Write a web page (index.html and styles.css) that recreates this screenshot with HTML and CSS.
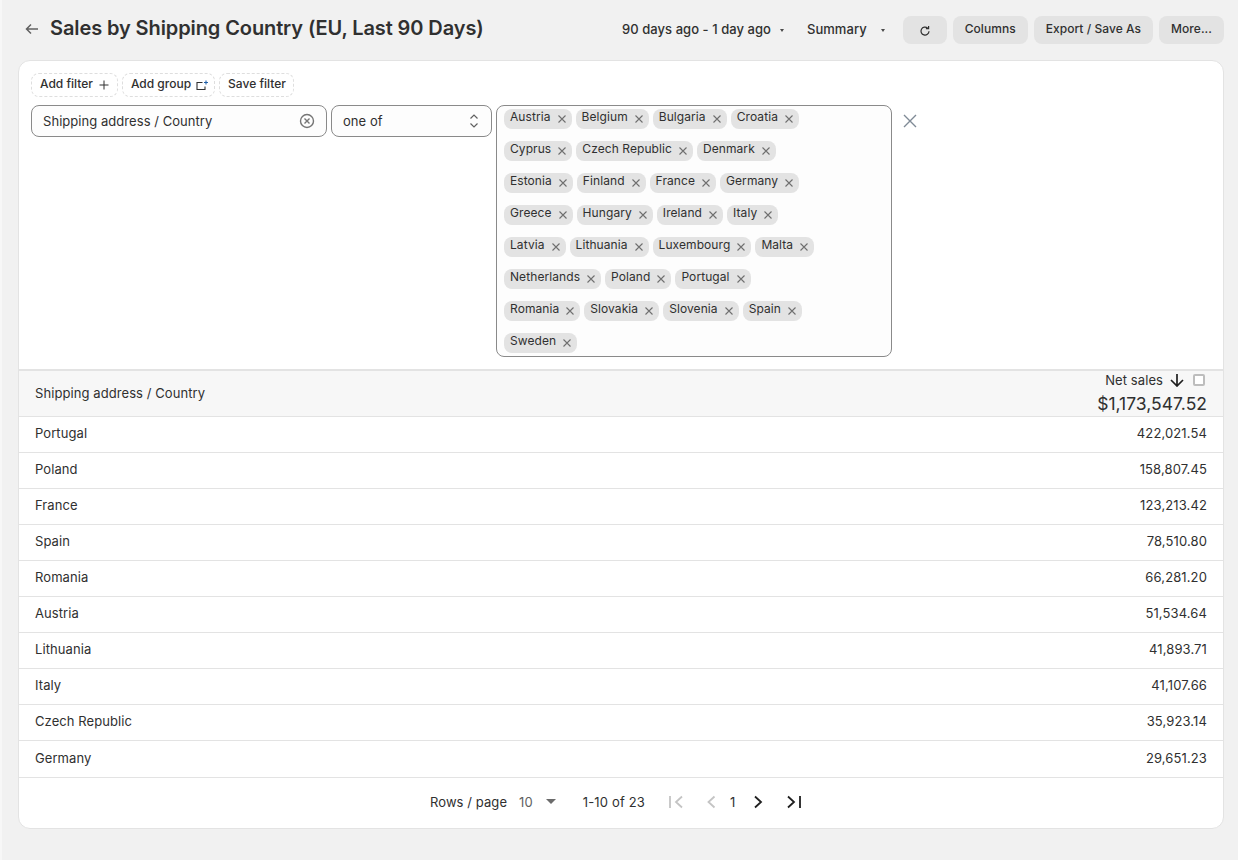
FILE: index.html
```html
<!DOCTYPE html>
<html lang="en">
<head>
<meta charset="utf-8">
<title>Sales by Shipping Country</title>
<link rel="stylesheet" href="styles.css">
</head>
<body>
<main class="page">
  <header class="topbar">
    <div class="title-group">
      <svg class="back" width="16" height="16" viewBox="0 0 16 16"><path d="M14 9H2.500M7 4.500 2.500 9 7 13.500" fill="none" stroke="#616161" stroke-width="1.500"/></svg>
      <h1>Sales by Shipping Country (EU, Last 90 Days)</h1>
    </div>
    <div class="actions">
      <span class="drop drop-date">90 days ago - 1 day ago<i class="caret"></i></span>
      <span class="drop drop-summary">Summary<i class="caret"></i></span>
      <button class="btn btn-refresh"><svg width="12" height="12" viewBox="0 0 12 12"><path d="M10 6.200A4 4 0 1 1 8.600 3" fill="none" stroke="#303030" stroke-width="1.200"/><path d="M9.600 1v2.700H6.900" fill="none" stroke="#303030" stroke-width="1.200"/></svg></button>
      <button class="btn">Columns</button>
      <button class="btn">Export / Save As</button>
      <button class="btn">More...</button>
    </div>
  </header>

  <section class="card">
    <div class="filters">
      <div class="filter-actions">
        <button class="dash dash-filter">Add filter<svg width="10" height="10" viewBox="0 0 10 10"><path d="M5 .500v9M.500 5h9" stroke="#303030" stroke-width="1"/></svg></button>
        <button class="dash dash-group">Add group<svg width="12" height="11" viewBox="0 0 12 11"><path d="M6.500 2.500H1v7h8V6.500" fill="none" stroke="#303030" stroke-width="1.100"/><path d="M10 .500v4M8 2.500h4" stroke="#1f5fa8" stroke-width="1.100"/></svg></button>
        <button class="dash">Save filter</button>
      </div>
      <div class="filter-row">
        <div class="field field-prop">Shipping address / Country
          <svg width="16" height="16" viewBox="0 0 16 16"><circle cx="8" cy="8" r="6.500" fill="none" stroke="#757575" stroke-width="1.400"/><path d="m5.500 5.500 5 5m0-5-5 5" stroke="#757575" stroke-width="1.400"/></svg>
        </div>
        <div class="field field-op">one of
          <svg width="10" height="16" viewBox="0 0 10 16"><path d="m1.500 5.500 3.500-3.500 3.500 3.500M1.500 10.500 5 14l3.500-3.500" fill="none" stroke="#616161" stroke-width="1.200"/></svg>
        </div>
        <div class="field-values">
          <div class="chip-row">
            <span class="chip">Austria<svg class="x"><use href="#x"/></svg></span>
            <span class="chip">Belgium<svg class="x"><use href="#x"/></svg></span>
            <span class="chip">Bulgaria<svg class="x"><use href="#x"/></svg></span>
            <span class="chip">Croatia<svg class="x"><use href="#x"/></svg></span>
          </div>
          <div class="chip-row">
            <span class="chip">Cyprus<svg class="x"><use href="#x"/></svg></span>
            <span class="chip">Czech Republic<svg class="x"><use href="#x"/></svg></span>
            <span class="chip">Denmark<svg class="x"><use href="#x"/></svg></span>
          </div>
          <div class="chip-row">
            <span class="chip">Estonia<svg class="x"><use href="#x"/></svg></span>
            <span class="chip">Finland<svg class="x"><use href="#x"/></svg></span>
            <span class="chip">France<svg class="x"><use href="#x"/></svg></span>
            <span class="chip">Germany<svg class="x"><use href="#x"/></svg></span>
          </div>
          <div class="chip-row">
            <span class="chip">Greece<svg class="x"><use href="#x"/></svg></span>
            <span class="chip">Hungary<svg class="x"><use href="#x"/></svg></span>
            <span class="chip">Ireland<svg class="x"><use href="#x"/></svg></span>
            <span class="chip">Italy<svg class="x"><use href="#x"/></svg></span>
          </div>
          <div class="chip-row">
            <span class="chip">Latvia<svg class="x"><use href="#x"/></svg></span>
            <span class="chip">Lithuania<svg class="x"><use href="#x"/></svg></span>
            <span class="chip">Luxembourg<svg class="x"><use href="#x"/></svg></span>
            <span class="chip">Malta<svg class="x"><use href="#x"/></svg></span>
          </div>
          <div class="chip-row">
            <span class="chip">Netherlands<svg class="x"><use href="#x"/></svg></span>
            <span class="chip">Poland<svg class="x"><use href="#x"/></svg></span>
            <span class="chip">Portugal<svg class="x"><use href="#x"/></svg></span>
          </div>
          <div class="chip-row">
            <span class="chip">Romania<svg class="x"><use href="#x"/></svg></span>
            <span class="chip">Slovakia<svg class="x"><use href="#x"/></svg></span>
            <span class="chip">Slovenia<svg class="x"><use href="#x"/></svg></span>
            <span class="chip">Spain<svg class="x"><use href="#x"/></svg></span>
          </div>
          <div class="chip-row">
            <span class="chip">Sweden<svg class="x"><use href="#x"/></svg></span>
          </div>
        </div>
        <svg class="remove" width="14" height="14" viewBox="0 0 14 14"><path d="m1 1 12 12M13 1 1 13" stroke="#7f8a96" stroke-width="1.400"/></svg>
      </div>
    </div>

    <div class="table">
      <div class="thead">
        <span>Shipping address / Country</span>
        <div class="metric">
          <div class="metric-label">Net sales
            <svg width="14" height="14" viewBox="0 0 14 14"><path d="M7 1v12M1 7 7 13l6-6" fill="none" stroke="#1f1f1f" stroke-width="1.700"/></svg>
            <i class="checkbox"></i>
          </div>
          <div class="metric-total">$1,173,547.52</div>
        </div>
      </div>
      <div class="row"><span>Portugal</span><span class="num">422,021.54</span></div>
      <div class="row"><span>Poland</span><span class="num">158,807.45</span></div>
      <div class="row"><span>France</span><span class="num">123,213.42</span></div>
      <div class="row"><span>Spain</span><span class="num">78,510.80</span></div>
      <div class="row"><span>Romania</span><span class="num">66,281.20</span></div>
      <div class="row"><span>Austria</span><span class="num">51,534.64</span></div>
      <div class="row"><span>Lithuania</span><span class="num">41,893.71</span></div>
      <div class="row"><span>Italy</span><span class="num">41,107.66</span></div>
      <div class="row"><span>Czech Republic</span><span class="num">35,923.14</span></div>
      <div class="row row-last"><span>Germany</span><span class="num">29,651.23</span></div>
    </div>

    <footer class="pager">
      <span class="pager-label">Rows / page</span>
      <span class="pager-size">10</span>
      <i class="pager-caret"></i>
      <span class="pager-range">1-10 of 23</span>
      <svg class="nav nav-first" width="16" height="14" viewBox="0 0 16 14"><path d="M2 1v12M14 1.500 8 7l6 5.500" fill="none" stroke="#c4c4c4" stroke-width="1.800"/></svg>
      <svg class="nav nav-prev" width="10" height="14" viewBox="0 0 10 14"><path d="M8.500 1.500 2.500 7l6 5.500" fill="none" stroke="#c4c4c4" stroke-width="1.800"/></svg>
      <span class="pager-page">1</span>
      <svg class="nav nav-next" width="10" height="14" viewBox="0 0 10 14"><path d="M2 1.500 8 7l-6 5.500" fill="none" stroke="#1f1f1f" stroke-width="1.800"/></svg>
      <svg class="nav nav-last" width="16" height="14" viewBox="0 0 16 14"><path d="M14 1v12M2 1.500 8 7l-6 5.500" fill="none" stroke="#1f1f1f" stroke-width="1.800"/></svg>
    </footer>
  </section>
</main>
<svg class="sprite" width="0" height="0"><defs><symbol id="x" viewBox="0 0 8 8"><path d="m.500.500 7 7m0-7-7 7" stroke="#6f6f6f" stroke-width="1.100"/></symbol></defs></svg>
</body>
</html>
```
FILE: styles.css
```css
* { box-sizing: border-box; }
html, body { margin: 0; height: 100%; }
body {
  background: #f1f1f1;
  color: #303030;
  font: 13px/20px Inter, "Liberation Sans", sans-serif;
  letter-spacing: .08px;
  overflow: hidden;
}
.page { padding: 0 14px 0 16px; height: 860px; border-left: 2px solid #f7f7f7; }
.sprite { position: absolute; }

.topbar { height: 60px; display: flex; justify-content: space-between; padding-top: 14px; }
.title-group { display: flex; align-items: center; gap: 10px; padding-left: 6px; height: 28px; }
h1 { margin: 0; font-size: 20px; line-height: 28px; font-weight: 600; color: #303030; letter-spacing: -.1px; }
.actions { display: flex; align-items: center; height: 28px; margin-top: 2px; }
.drop { display: flex; align-items: center; font-weight: 500; color: #303030; padding-bottom: 2px; letter-spacing: .05px; }
.caret { width: 0; height: 0; border: 2.500px solid transparent; border-top: 3px solid #4a4a4a; border-bottom: 0; margin-left: 9px; margin-top: 2px; }
.drop-date { margin-right: 23px; }
.drop-summary { margin-right: 18px; }
.drop-summary .caret { margin-left: 14px; }
.btn {
  height: 28px; padding: 0 12px 2px; margin-left: 6px; border: 0; border-radius: 8px;
  background: #e3e3e3; color: #303030; font: 500 12px/20px Inter, sans-serif; letter-spacing: .05px;
  display: flex; align-items: center;
}
.btn-refresh { width: 44px; justify-content: center; margin-left: 0; padding: 2px 0 0; }

.card { height: 769px; background: #fff; border: 1px solid #e3e3e3; border-radius: 12px; overflow: hidden; display: flex; flex-direction: column; }
.filters { height: 308px; padding: 12px 12px 0; flex: none; }
.filter-actions { display: flex; gap: 4px; height: 24px; margin-bottom: 8px; }
.dash {
  display: flex; align-items: center; gap: 6px; height: 24px; padding: 0 7px 2px 8px;
  background: #fff; border: 1px dashed #dedede; border-radius: 8px;
  font: 500 12px/20px Inter, sans-serif; color: #303030;
}
.dash svg { margin-top: 2px; }
.dash-filter { padding-right: 8px; }
.dash-group { gap: 5px; padding-right: 6px; }
.filter-row { display: flex; align-items: flex-start; gap: 4px; }
.field {
  height: 32px; border: 1px solid #8a8a8a; border-radius: 8px; background: #fdfdfd;
  display: flex; align-items: center; justify-content: space-between; padding: 0 11px;
  letter-spacing: .05px;
}
.field-prop { width: 296px; }
.field-op { width: 161px; padding-right: 12px; }
.field-values { width: 396px; height: 252px; border: 1px solid #8a8a8a; border-radius: 8px; background: #fdfdfd; padding: 3px 7px; display: flex; flex-direction: column; gap: 12px; }
.chip-row { display: flex; gap: 4px; }
.chip {
  height: 20px; padding: 0 6px; background: #e3e3e3; border-radius: 8px;
  display: flex; gap: 7px; font-size: 12px; line-height: 16px; letter-spacing: .08px; color: #303030;
}
.x { width: 8px; height: 8px; margin-top: 6px; }
.remove { margin: 9px 0 0 7px; }

.table { flex: none; }
.thead {
  height: 48px; border-top: 2px solid #e3e3e3; border-bottom: 1px solid #e3e3e3; background: #f7f7f7;
  display: flex; justify-content: space-between; align-items: center; padding: 0 16px 2px;
}
.metric { display: flex; flex-direction: column; align-items: flex-end; margin-top: 1px; }
.metric-label { display: flex; align-items: center; height: 18px; gap: 7px; }
.checkbox { width: 12px; height: 12px; border: 2px solid #bdbdbd; border-radius: 2px; background: #fff; display: block; margin: 0 2px 0 2px; }
.metric-total { font-size: 17.500px; line-height: 26px; color: #303030; margin: 2px 0 -1px; letter-spacing: .02px; }
.row { height: 36px; border-bottom: 1px solid #e3e3e3; display: flex; justify-content: space-between; align-items: center; padding: 0 16px 4px; }
.row-last { height: 37px; padding-bottom: 2px; }
.num { letter-spacing: .12px; }

.pager { flex: 1; display: flex; align-items: center; padding-left: 411px; padding-bottom: 3px; }
.pager-size { margin-left: 12px; color: #616161; }
.pager-caret { width: 0; height: 0; border: 5.500px solid transparent; border-top: 5px solid #6b6b6b; border-bottom: 0; margin-left: 13px; }
.pager-range { margin-left: 27px; letter-spacing: .16px; }
.nav-first { margin-left: 23px; }
.nav-prev { margin-left: 22px; }
.pager-page { margin-left: 14px; }
.nav-next { margin-left: 18px; }
.nav-last { margin-left: 23px; }
```
